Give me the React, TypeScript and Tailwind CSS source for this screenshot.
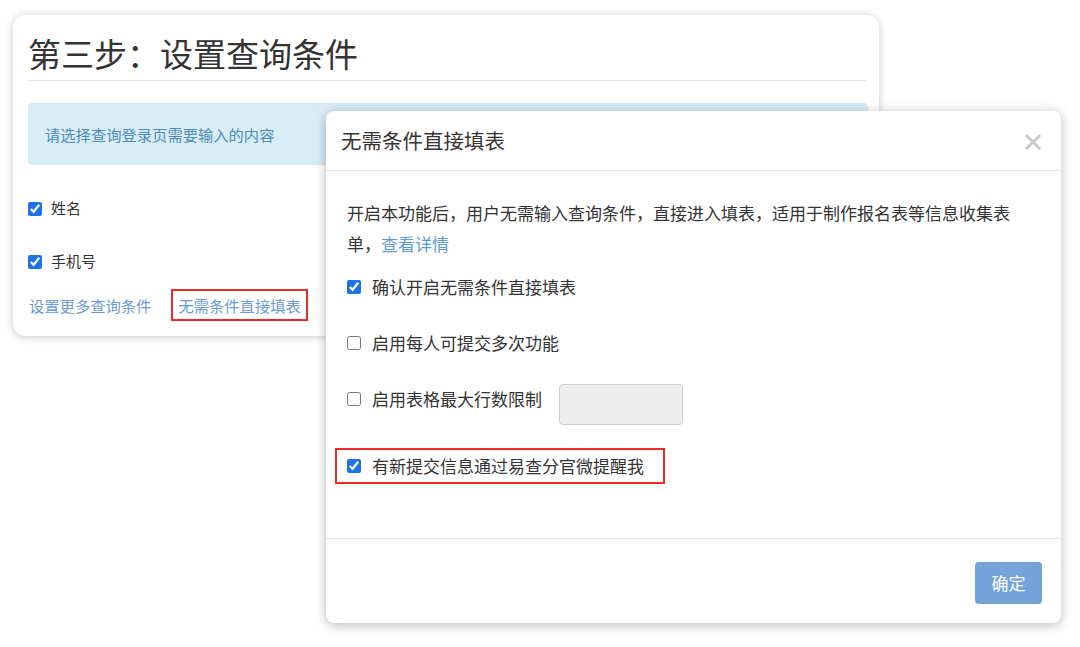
import React from "react";

const font = {
  fontFamily: '"Noto Sans CJK SC", "Noto Sans", sans-serif',
};

function Check({ checked }: { checked?: boolean }) {
  return (
    <input
      type="checkbox"
      defaultChecked={checked}
      className="m-0 h-[14px] w-[14px] shrink-0 accent-[#1a73e8]"
    />
  );
}

function StepCard() {
  return (
    <div className="ml-[13px] mt-[15px] h-[321px] w-[866px] rounded-xl bg-white pl-[15px] pt-[16px] shadow-[0_1px_8px_rgba(0,0,0,0.22)]">
      <div className="w-[838px] border-b border-[#e5e5e5] pb-[5px]">
        <h1 className="text-[33px] leading-[44px] font-normal text-[#333]">
          第三步：设置查询条件
        </h1>
      </div>
      <div className="mt-[22px] flex h-[62px] w-[840px] items-center rounded border border-[#cfe8f3] bg-[#d9edf7] pl-[16px] text-[15.3px] text-[#4d8ab5]">
        请选择查询登录页需要输入的内容
      </div>
      <div className="mt-[17px] flex h-[53px] items-center gap-[9px] text-[15px] text-[#333]">
        <Check checked />
        <span>姓名</span>
      </div>
      <div className="flex h-[53px] items-center gap-[9px] text-[15px] text-[#333]">
        <Check checked />
        <span>手机号</span>
      </div>
      <div className="mt-[1px] flex items-center text-[15.3px] text-[#6b9bd2]">
        <span className="pl-[1px]">设置更多查询条件</span>
        <span className="ml-[20px] flex h-[32px] items-center border-2 border-[#ee2a24] px-[5px]">
          无需条件直接填表
        </span>
      </div>
    </div>
  );
}

function Modal() {
  return (
    <div className="absolute left-[326px] top-[111px] flex h-[512px] w-[735px] flex-col rounded-lg bg-white shadow-[0_2px_12px_rgba(0,0,0,0.28)]">
      <div className="flex h-[60px] shrink-0 items-center justify-between border-b border-[#e5e5e5] pl-[15px] pr-[16px]">
        <span className="text-[20.5px] text-[#333]">无需条件直接填表</span>
        <span className="text-[24px] leading-none font-bold text-[#c4c4c4]">×</span>
      </div>
      <div className="flex-1 pl-[21px] pr-[30px] pt-[26px] text-[17px] text-[#333]">
        <p className="leading-[31px]">
          开启本功能后，用户无需输入查询条件，直接进入填表，适用于制作报名表等信息收集表单，<a className="text-[#5b9bd9]">查看详情</a>
        </p>
        <div className="flex h-[56px] items-center gap-[11px]">
          <Check checked />
          <span>确认开启无需条件直接填表</span>
        </div>
        <div className="flex h-[56px] items-center gap-[11px]">
          <Check />
          <span>启用每人可提交多次功能</span>
        </div>
        <div className="flex h-[56px] items-center gap-[11px]">
          <Check />
          <span>启用表格最大行数限制</span>
          <div className="ml-[6px] mt-[11px] h-[41px] w-[124px] rounded border border-[#cccccc] bg-[#eeeeee]" />
        </div>
        <div className="-ml-[12px] mt-[21px] flex h-[36px] w-[330px] items-center gap-[11px] border-2 border-[#ee2a24] pl-[10px]">
          <Check checked />
          <span>有新提交信息通过易查分官微提醒我</span>
        </div>
      </div>
      <div className="flex h-[85px] shrink-0 justify-end border-t border-[#e5e5e5] pr-[19px] pt-[23px]">
        <button className="h-[42px] w-[67px] rounded bg-[#74a3d9] text-[17px] text-white">
          确定
        </button>
      </div>
    </div>
  );
}

export default function App() {
  return (
    <div className="relative h-[647px] w-[1080px] overflow-hidden bg-white" style={font}>
      <StepCard />
      <Modal />
    </div>
  );
}
